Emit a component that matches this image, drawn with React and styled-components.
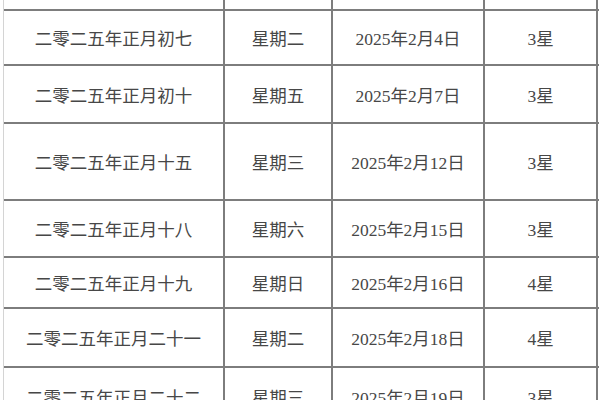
import React from "react";
import styled, { createGlobalStyle } from "styled-components";

const Global = createGlobalStyle`
  html, body { margin: 0; padding: 0; background: #ffffff; }
  body { width: 600px; height: 400px; overflow: hidden; }
`;

const Table = styled.div`
  margin-left: 3px;
  width: 595px;
  border-left: 1px solid #d4d4d4;
  display: flex;
  flex-direction: column;
  font-family: "Liberation Serif", "Noto Sans CJK SC", serif;
  font-size: 17.5px;
  color: #474747;
`;

const Row = styled.div`
  display: grid;
  grid-template-columns: 221px 108px 152px 113px;
  height: ${(p) => p.h}px;
  box-sizing: border-box;
  border-bottom: 2px solid #7d7d7d;
`;

const Cell = styled.div`
  display: flex;
  align-items: center;
  justify-content: center;
  box-sizing: border-box;
  border-right: 2px solid #7d7d7d;
  white-space: nowrap;
  padding-top: ${(p) => p.$pt || 0}px;
`;

const rows = [
  { h: 58 - 3, lunar: "二零二五年正月初七", week: "星期二", date: "2025年2月4日", star: "3星" },
  { h: 58, lunar: "二零二五年正月初十", week: "星期五", date: "2025年2月7日", star: "3星" },
  { h: 77, lunar: "二零二五年正月十五", week: "星期三", date: "2025年2月12日", star: "3星" },
  { h: 57, lunar: "二零二五年正月十八", week: "星期六", date: "2025年2月15日", star: "3星" },
  { h: 51, lunar: "二零二五年正月十九", week: "星期日", date: "2025年2月16日", star: "4星" },
  { h: 59, lunar: "二零二五年正月二十一", week: "星期二", date: "2025年2月18日", star: "4星" },
  { h: 58, lunar: "二零二五年正月二十二", week: "星期三", date: "2025年2月19日", star: "3星" },
];

export default function App() {
  return (
    <>
      <Global />
      <Table>
        <Row h={11}>
          <Cell />
          <Cell />
          <Cell />
          <Cell />
        </Row>
        {rows.map((r, i) => (
          <Row key={i} h={r.h}>
            <Cell>{r.lunar}</Cell>
            <Cell>{r.week}</Cell>
            <Cell>{r.date}</Cell>
            <Cell>{r.star}</Cell>
          </Row>
        ))}
      </Table>
    </>
  );
}
